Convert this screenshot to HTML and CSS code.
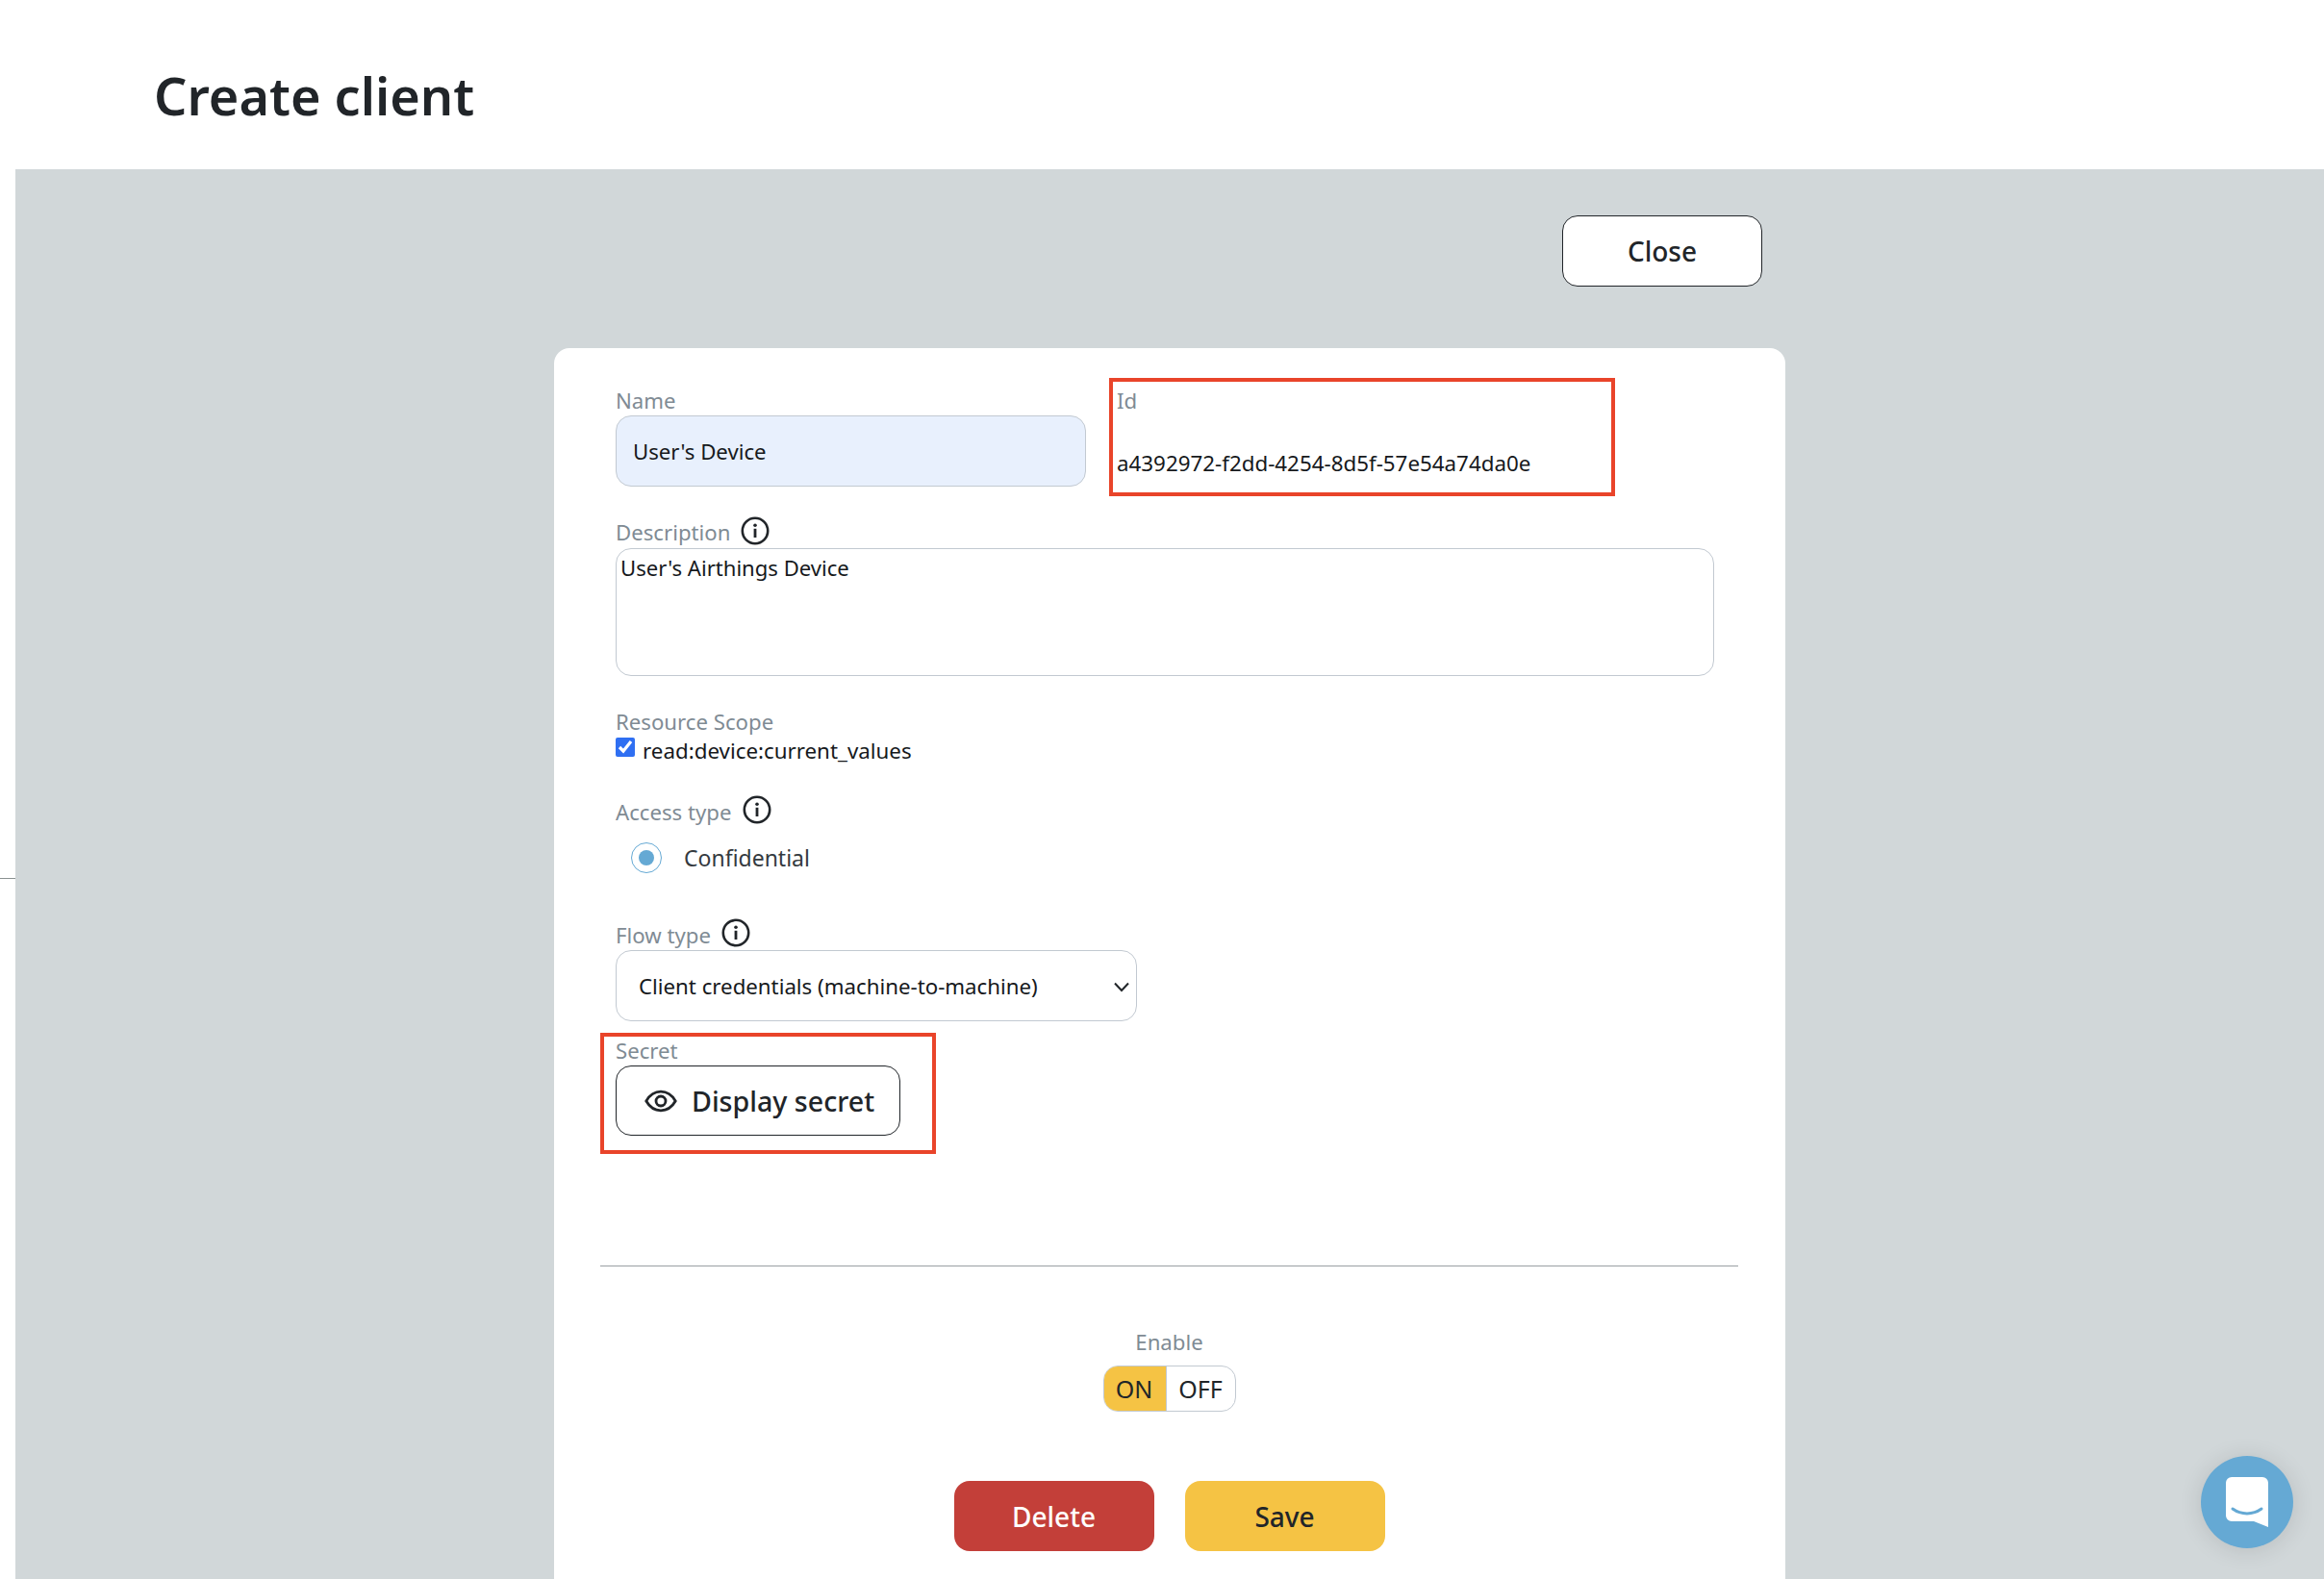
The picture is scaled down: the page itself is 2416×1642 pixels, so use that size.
FILE: index.html
```html
<!DOCTYPE html>
<html lang="en">
<head>
    <meta charset="UTF-8">
    <meta name="viewport" content="width=device-width, initial-scale=1.0">
    <title>Create client</title>
    <link rel="stylesheet" href="styles.css">
</head>
<body>
    <svg class="icon-defs" width="0" height="0" aria-hidden="true">
        <symbol id="info" viewBox="0 0 30 30">
            <circle cx="15" cy="15" r="13.2" fill="none" stroke="currentColor" stroke-width="2.6"/>
            <circle cx="15" cy="9.2" r="1.8" fill="currentColor"/>
            <rect x="13.6" y="12.8" width="2.8" height="9.2" fill="currentColor"/>
        </symbol>
    </svg>

    <header class="page-header">
        <h1>Create client</h1>
    </header>

    <div class="page-body">
        <div class="rail"><span class="rail-tick"></span></div>

        <main class="content">
            <div class="close-row">
                <button class="btn btn-outline" type="button">Close</button>
            </div>

            <form class="card">
                <div class="top-row">
                    <div class="name-field">
                        <label class="field-label" for="clientName">Name</label>
                        <input class="name-input" id="clientName" type="text" value="User's Device">
                    </div>
                    <div class="id-field marked">
                        <div class="field-label">Id</div>
                        <div class="id-value">a4392972-f2dd-4254-8d5f-57e54a74da0e</div>
                    </div>
                </div>

                <div class="label-row description-label">
                    <label class="field-label" for="clientDescription">Description</label>
                    <svg class="info-icon"><use href="#info"/></svg>
                </div>
                <textarea class="description-input" id="clientDescription">User's Airthings Device</textarea>

                <div class="field-label scope-label">Resource Scope</div>
                <label class="scope-row">
                    <input class="scope-check" type="checkbox" checked>
                    <span>read:device:current_values</span>
                </label>

                <div class="label-row access-label">
                    <span class="field-label">Access type</span>
                    <svg class="info-icon"><use href="#info"/></svg>
                </div>
                <div class="radio-row">
                    <span class="radio"><span class="radio-dot"></span></span>
                    <span class="radio-text">Confidential</span>
                </div>

                <div class="label-row flow-label">
                    <label class="field-label" for="flowType">Flow type</label>
                    <svg class="info-icon"><use href="#info"/></svg>
                </div>
                <div class="select-wrap">
                    <select class="flow-select" id="flowType">
                        <option>Client credentials (machine-to-machine)</option>
                    </select>
                    <svg class="select-chevron" viewBox="0 0 18 12" fill="none" stroke="#212529" stroke-width="2"><path d="M2 2.5l7 7.5 7-7.5"/></svg>
                </div>

                <div class="secret-field marked">
                    <div class="field-label">Secret</div>
                    <button class="btn-secret" type="button">
                        <svg class="eye-icon" viewBox="0 0 34 24" fill="none" stroke="#212529" stroke-width="2.8">
                            <path d="M1.8 12C5.5 5.6 10.6 2.2 17 2.2S28.5 5.6 32.2 12C28.5 18.4 23.4 21.8 17 21.8S5.5 18.4 1.8 12z"/>
                            <circle cx="17" cy="12" r="5"/>
                        </svg>
                        Display secret
                    </button>
                </div>

                <div class="card-footer">
                    <div class="field-label">Enable</div>
                    <div class="toggle">
                        <span class="toggle-on">ON</span>
                        <span class="toggle-off">OFF</span>
                    </div>
                    <div class="actions">
                        <button class="btn btn-delete" type="button">Delete</button>
                        <button class="btn btn-save" type="button">Save</button>
                    </div>
                </div>
            </form>
        </main>
    </div>

    <button class="chat-launcher" type="button" aria-label="Chat">
        <svg viewBox="0 0 44 52" width="44" height="52">
            <path fill="#fff" d="M6 0h32a6 6 0 0 1 6 6v46l-15-6H6a6 6 0 0 1-6-6V6a6 6 0 0 1 6-6z"/>
            <path fill="none" stroke="#65a9d4" stroke-width="3" stroke-linecap="round" d="M7 33c9 6.500 21 6.500 30 0"/>
        </svg>
    </button>
</body>
</html>
```

FILE: styles.css
```css
* {
    box-sizing: border-box;
}
html, body {
    height: 100%;
}
body {
    margin: 0;
    display: flex;
    flex-direction: column;
    overflow: hidden;
    font-family: "Noto Sans", "Open Sans", sans-serif;
    font-size: 22.35px;
    line-height: 30px;
    color: #16191c;
    background-color: #fff;
}
.icon-defs {
    position: absolute;
}
.page-header {
    flex: none;
    height: 176px;
    padding: 64px 0 0 160px;
}
h1 {
    margin: 0;
    font-size: 54px;
    line-height: 70px;
    font-weight: 600;
    color: #212529;
}
.page-body {
    flex: 1;
    min-height: 0;
    display: flex;
}
.rail {
    flex: none;
    width: 16px;
    padding-top: 737px;
}
.rail-tick {
    display: block;
    height: 1px;
    background-color: #8a9191;
}
.content {
    flex: 1;
    min-width: 0;
    background-color: #d1d7d9;
}
.close-row {
    width: 1280px;
    margin: 48px auto 64px;
    padding-right: 24px;
    display: flex;
    justify-content: flex-end;
}
button, input, textarea, select {
    font-family: inherit;
    color: inherit;
}
.btn {
    width: 208px;
    height: 73px;
    border: 0;
    border-radius: 16px;
    font-size: 28px;
    font-weight: 500;
    color: #212529;
    cursor: pointer;
}
.btn-outline {
    height: 74px;
    background-color: #fff;
    border: 1.5px solid #212529;
}
.card {
    width: 1280px;
    margin: 0 auto;
    padding: 31px 74px 60px 64px;
    background-color: #fff;
    border-radius: 16px;
}
.field-label {
    display: block;
    color: #7f8b94;
    font-size: 22.2px;
    line-height: 30px;
}
.marked {
    border: 4px solid #e9442a;
}
.top-row {
    display: flex;
    align-items: flex-start;
    gap: 24px;
}
.name-field {
    width: 489px;
    padding-top: 9px;
}
.name-input {
    display: block;
    width: 100%;
    height: 74px;
    padding: 0 17px;
    font-size: 22.2px;
    background-color: #e8f0fd;
    border: 1.5px solid #c2c9d1;
    border-radius: 16px;
}
.id-field {
    width: 526px;
    height: 123px;
    padding: 5px 0 0 4px;
}
.id-value {
    margin-top: 35px;
}
.label-row {
    display: flex;
    align-items: center;
    height: 32px;
    gap: 11px;
}
.label-row .field-label {
    padding-top: 1px;
}
.description-label {
    margin-top: 22px;
}
.description-label .field-label {
    padding: 0 0 1px;
}
.info-icon {
    flex: none;
    width: 30px;
    height: 30px;
    color: #212529;
    margin-bottom: 5px;
}
.description-input {
    display: block;
    width: 1142px;
    height: 133px;
    padding: 4px 4px;
    font-size: 22.1px;
    line-height: 30px;
    background-color: #fff;
    border: 1.5px solid #c2c9d1;
    border-radius: 16px;
    resize: none;
}
.scope-label {
    margin-top: 33px;
}
.scope-row {
    display: flex;
    height: 30px;
    gap: 8px;
}
.scope-check {
    width: 20px;
    height: 20px;
    margin: 1px 0 0;
    accent-color: #2f6ff2;
}
.access-label {
    margin-top: 32px;
}
.radio-row {
    display: flex;
    align-items: center;
    height: 32px;
    margin-top: 16px;
    padding-left: 16px;
    gap: 23px;
}
.radio {
    width: 32px;
    height: 32px;
    display: flex;
    align-items: center;
    justify-content: center;
    border: 1.5px solid #65a9d4;
    border-radius: 50%;
}
.radio-dot {
    width: 16px;
    height: 16px;
    background-color: #65a9d4;
    border-radius: 50%;
}
.radio-text {
    font-size: 23px;
    color: #343a40;
}
.flow-label {
    margin-top: 48px;
}
.select-wrap {
    position: relative;
    width: 542px;
}
.flow-select {
    display: block;
    width: 100%;
    height: 74px;
    padding: 0 40px 0 23px;
    font-size: 22.25px;
    background-color: #fff;
    border: 1.5px solid #c2c9d1;
    border-radius: 16px;
    appearance: none;
}
.select-chevron {
    position: absolute;
    top: 32px;
    right: 7px;
    width: 18px;
    height: 12px;
}
.secret-field {
    width: 349px;
    height: 126px;
    margin: 12px 0 0 -16px;
    padding: 0 0 0 12px;
}
.btn-secret {
    display: flex;
    align-items: center;
    width: 296px;
    height: 73px;
    padding: 0 0 0 29px;
    gap: 15px;
    font-size: 28.6px;
    font-weight: 500;
    color: #212529;
    white-space: nowrap;
    background-color: #fff;
    border: 1.5px solid #212529;
    border-radius: 16px;
    cursor: pointer;
}
.eye-icon {
    flex: none;
    width: 34px;
    height: 24px;
}
.card-footer {
    width: 1183px;
    margin: 116px 0 0 -16px;
    padding-top: 64px;
    display: flex;
    flex-direction: column;
    align-items: center;
    border-top: 1px solid #9a9fa3;
}
.toggle {
    display: flex;
    height: 48px;
    margin-top: 9px;
    line-height: 46px;
    font-size: 25px;
    color: #212529;
    border: 1px solid #c2c9d1;
    border-radius: 15px;
    overflow: hidden;
}
.toggle-on {
    width: 66px;
    margin: -1px 0 -1px -1px;
    padding-top: 1px;
    text-align: center;
    background-color: #f5c344;
    border-right: 1px solid #c2c9d1;
}
.toggle-off {
    width: 71px;
    text-align: center;
}
.actions {
    display: flex;
    gap: 32px;
    margin-top: 72px;
}
.btn-delete {
    color: #fff;
    background-color: #c33f39;
}
.btn-save {
    background-color: #f5c344;
}
.chat-launcher {
    position: fixed;
    right: 32px;
    bottom: 32px;
    width: 96px;
    height: 96px;
    padding: 0;
    display: flex;
    align-items: center;
    justify-content: center;
    border: 0;
    border-radius: 50%;
    background-color: #65a9d4;
    box-shadow: 0 2px 24px rgba(0, 0, 0, 0.12);
}
```
